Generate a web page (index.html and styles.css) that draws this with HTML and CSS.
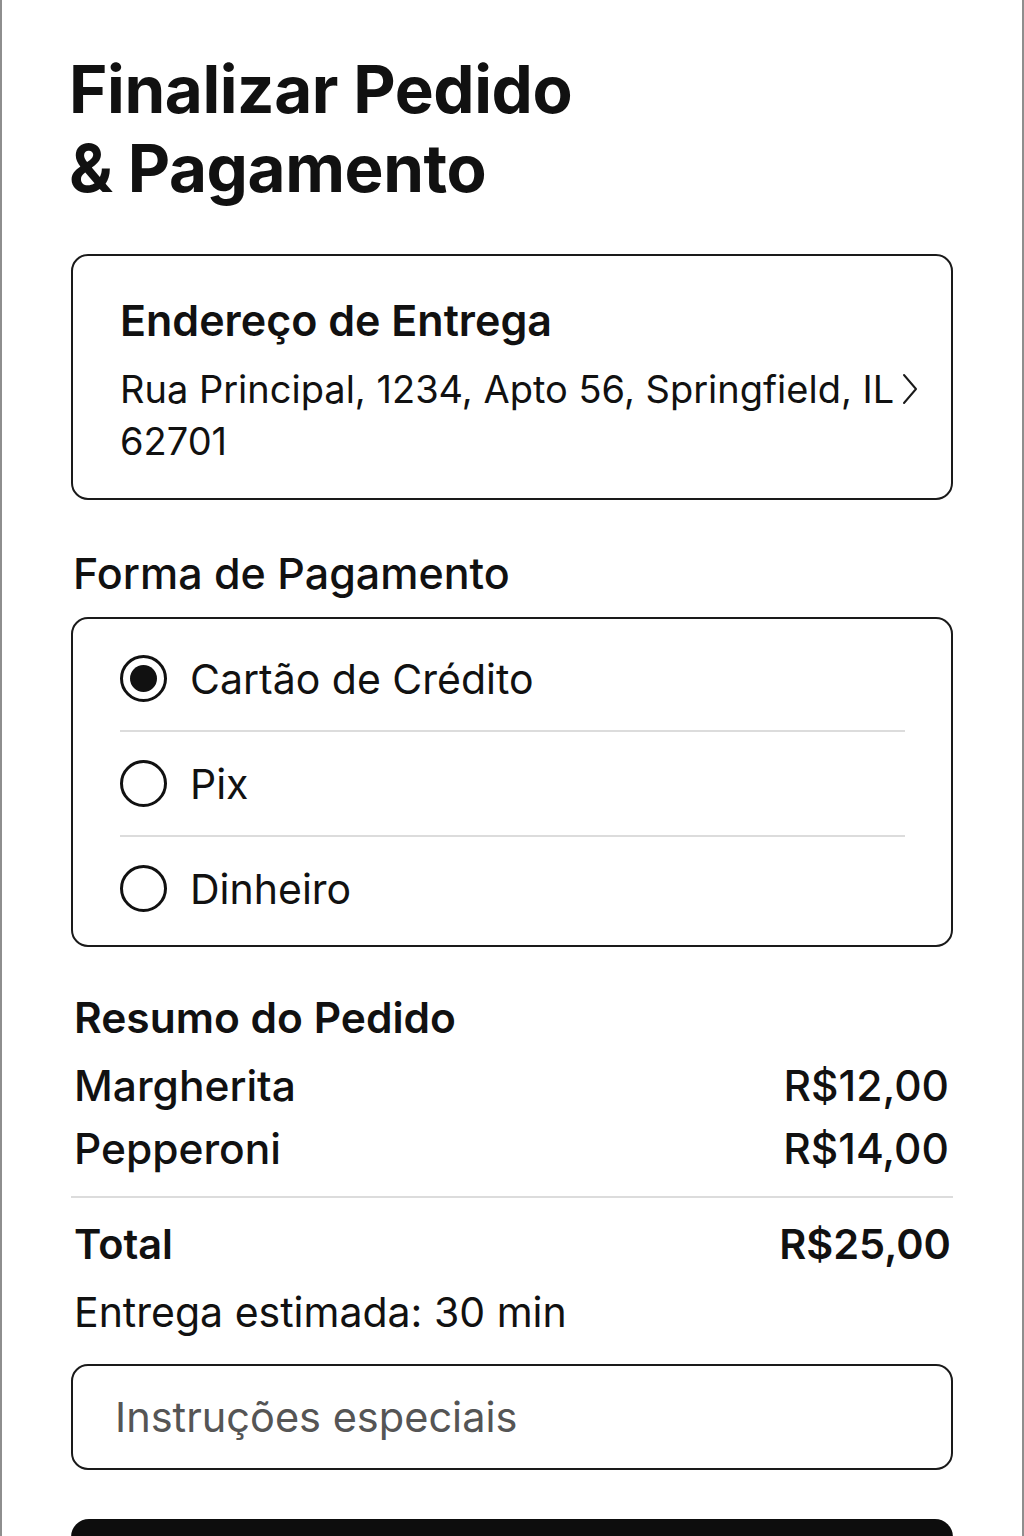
FILE: index.html
```html
<!DOCTYPE html>
<html lang="pt-BR">
<head>
<meta charset="utf-8">
<title>Finalizar Pedido & Pagamento</title>
<link rel="stylesheet" href="styles.css">
</head>
<body>
<main class="page">
  <h1 class="title">Finalizar Pedido<br>&amp; Pagamento</h1>

  <section class="card address">
    <h2 class="card-heading">Endereço de Entrega</h2>
    <div class="address-row">
      <p class="address-text">Rua Principal, 1234, Apto 56, Springfield, IL<br>62701</p>
      <svg class="chevron" width="16" height="32" viewBox="0 0 16 32" aria-hidden="true">
        <path d="M2 2 L14 16 L2 30" fill="none" stroke="#1a1a1a" stroke-width="2" stroke-linecap="round" stroke-linejoin="round"/>
      </svg>
    </div>
  </section>

  <h2 class="section-heading">Forma de Pagamento</h2>
  <section class="card payment">
    <label class="option">
      <span class="radio checked"></span>
      <span class="option-label">Cartão de Crédito</span>
    </label>
    <div class="divider"></div>
    <label class="option">
      <span class="radio"></span>
      <span class="option-label">Pix</span>
    </label>
    <div class="divider"></div>
    <label class="option">
      <span class="radio"></span>
      <span class="option-label">Dinheiro</span>
    </label>
  </section>

  <h2 class="section-heading summary-heading">Resumo do Pedido</h2>
  <div class="summary">
    <div class="item"><span>Margherita</span><span>R$12,00</span></div>
    <div class="item"><span>Pepperoni</span><span>R$14,00</span></div>
  </div>
  <div class="rule"></div>
  <div class="total"><span>Total</span><span>R$25,00</span></div>
  <p class="eta">Entrega estimada: 30 min</p>

  <div class="input"><span class="placeholder">Instruções especiais</span></div>

  <button class="cta" type="button"></button>
</main>
</body>
</html>
```

FILE: styles.css
```css
* { box-sizing: border-box; }

html, body {
  margin: 0;
  padding: 0;
  background: #ffffff;
}

body {
  font-family: Inter, "Noto Sans", "Liberation Sans", sans-serif;
  color: #111111;
}

.page {
  width: 1024px;
  min-height: 1536px;
  border-left: 2px solid #8e8e8e;
  border-right: 2px solid #8e8e8e;
  padding: 50px 69px 0 69px;
  overflow: hidden;
}

.title {
  margin: 0 0 0 -2px;
  font-size: 65.5px;
  line-height: 79px;
  font-weight: 700;
  letter-spacing: -0.4px;
}

.card {
  border: 2px solid #1a1a1a;
  border-radius: 17px;
}

.address {
  margin-top: 46px;
  padding: 39px 33px 31px 47px;
}

.card-heading {
  margin: 0 0 18px 0;
  font-size: 43px;
  line-height: 50px;
  font-weight: 600;
}

.address-row {
  display: flex;
  align-items: flex-start;
  gap: 6px;
}

.address-text {
  margin: 0;
  flex: 1;
  font-size: 38px;
  line-height: 52px;
}

.chevron {
  margin-top: 10px;
  flex: none;
}

.section-heading {
  margin: 48px 0 19px 2px;
  font-size: 43px;
  line-height: 50px;
  font-weight: 500;
}

.payment {
  padding: 8px 46px 5px 47px;
}

.option {
  height: 103px;
  display: flex;
  align-items: center;
  gap: 23px;
}

.radio {
  width: 47px;
  height: 47px;
  border: 3px solid #111111;
  border-radius: 50%;
  display: flex;
  align-items: center;
  justify-content: center;
  flex: none;
}

.radio.checked::after {
  content: "";
  width: 27px;
  height: 27px;
  border-radius: 50%;
  background: #111111;
}

.option-label {
  font-size: 41px;
  line-height: 50px;
}

.divider {
  height: 2px;
  background: #dcdcdc;
}

.summary-heading {
  margin: 46px 0 11px 3px;
  font-size: 42.5px;
  font-weight: 600;
}

.summary {
  padding: 0 4px 0 3px;
}

.item, .total {
  display: flex;
  justify-content: space-between;
  font-size: 42.5px;
  line-height: 63px;
  font-weight: 500;
}

.rule {
  margin-top: 16px;
  height: 2px;
  background: #dcdcdc;
}

.total {
  margin-top: 21px;
  padding: 0 2px 0 3px;
  font-size: 41.5px;
  line-height: 50px;
  font-weight: 600;
}

.eta {
  margin: 18px 0 0 3px;
  font-size: 41px;
  line-height: 50px;
}

.input {
  margin-top: 27px;
  height: 106px;
  border: 2px solid #1a1a1a;
  border-radius: 17px;
  display: flex;
  align-items: center;
  padding-left: 42px;
}

.placeholder {
  font-size: 41.5px;
  color: #555555;
}

.cta {
  display: block;
  margin-top: 49px;
  width: 100%;
  height: 90px;
  border: none;
  border-radius: 18px;
  background: #0d0d0d;
}
```
